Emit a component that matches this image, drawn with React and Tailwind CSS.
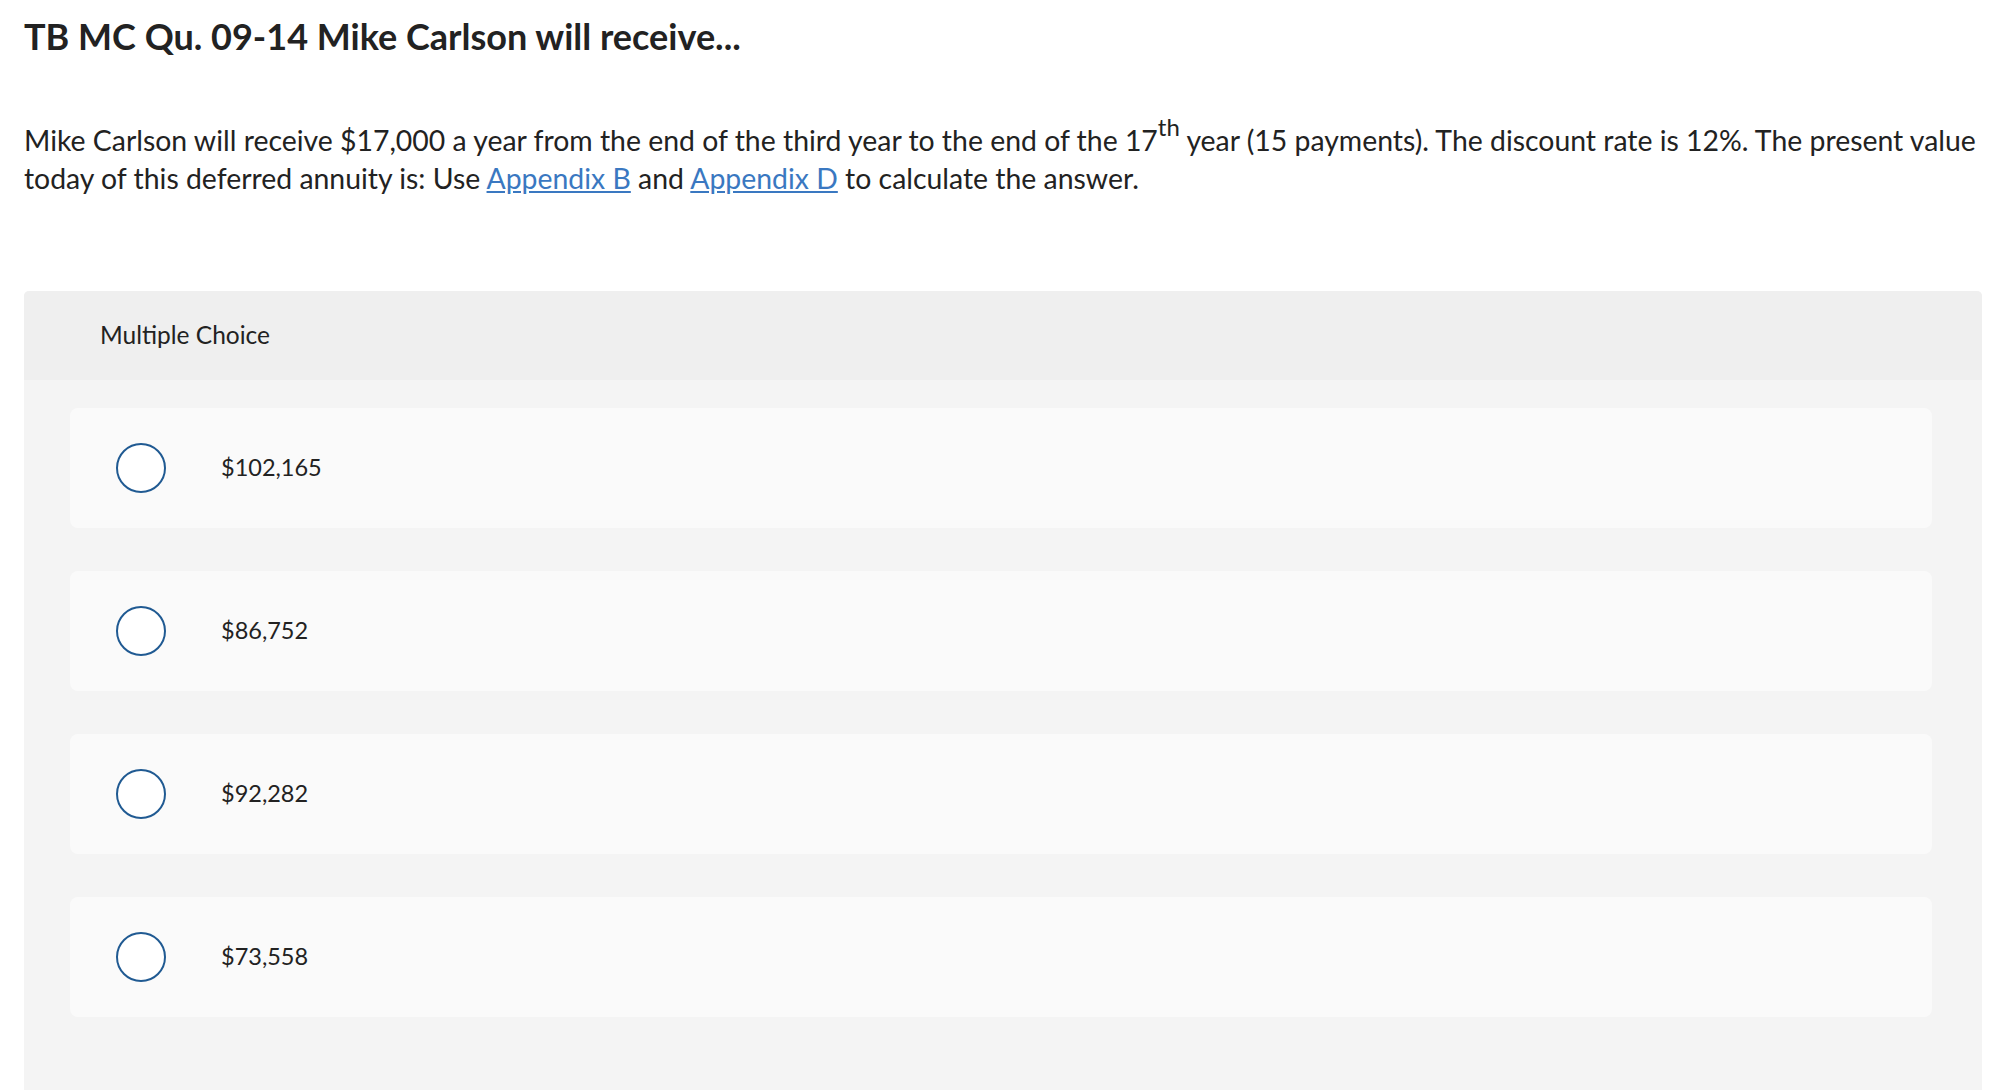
import React from "react";

const options = ["$102,165", "$86,752", "$92,282", "$73,558"];

const App = () => {
  return (
    <div
      className="min-h-screen bg-white pl-[24px] pr-[18px] pt-[16px] text-[#222222]"
      style={{ fontFamily: "Lato, 'Open Sans', sans-serif" }}
    >
      <h1 className="text-[36px] font-bold leading-[40px]">
        TB MC Qu. 09-14 Mike Carlson will receive...
      </h1>

      <p className="mt-[65px] text-[28.4px] leading-[38px]">
        Mike Carlson will receive $17,000 a year from the end of the third year to the end of the 17
        <sup className="relative -top-[15px] text-[24px] leading-none">th</sup> year (15 payments). The
        discount rate is 12%. The present value today of this deferred annuity is: Use{" "}
        <a href="#" className="text-[#3a78c1] underline">
          Appendix B
        </a>{" "}
        and{" "}
        <a href="#" className="text-[#3a78c1] underline">
          Appendix D
        </a>{" "}
        to calculate the answer.
      </p>

      <div className="mt-[94px] rounded-t-[5px] bg-[#f4f4f4] pb-[80px]">
        <div className="flex h-[89px] items-center rounded-t-[5px] bg-[#efefef] pl-[76px] text-[24.5px]">
          Multiple Choice
        </div>
        <div className="flex flex-col gap-[43px] pl-[46px] pr-[50px] pt-[28px]">
          {options.map((opt) => (
            <div
              key={opt}
              className="flex h-[120px] items-center rounded-[8px] bg-[#fafafa] pl-[46px]"
            >
              <span className="h-[50px] w-[50px] rounded-full border-2 border-[#205a92] bg-white" />
              <span className="ml-[55px] text-[23.5px]">{opt}</span>
            </div>
          ))}
        </div>
      </div>
    </div>
  );
};

export default App;
